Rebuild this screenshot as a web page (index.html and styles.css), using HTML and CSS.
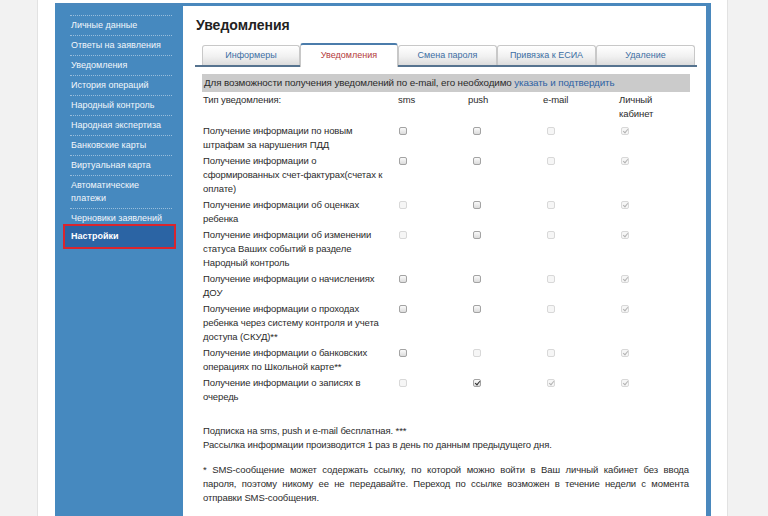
FILE: index.html
```html
<!DOCTYPE html>
<html lang="ru">
<head>
<meta charset="utf-8">
<title>Уведомления</title>
<link rel="stylesheet" href="styles.css">
</head>
<body>
<div class="page">
  <div class="frame">
    <nav class="sidebar">
      <ul class="menu">
        <li>Личные данные</li>
        <li>Ответы на заявления</li>
        <li>Уведомления</li>
        <li>История операций</li>
        <li>Народный контроль</li>
        <li>Народная экспертиза</li>
        <li>Банковские карты</li>
        <li>Виртуальная карта</li>
        <li>Автоматические<br>платежи</li>
        <li>Черновики заявлений</li>
      </ul>
      <div class="menu-active">Настройки</div>
    </nav>
    <main class="main">
      <h1 class="title">Уведомления</h1>
      <div class="tabs">
        <div class="tab w98">Информеры</div>
        <div class="tab active w98">Уведомления</div>
        <div class="tab w99">Смена пароля</div>
        <div class="tab w99">Привязка к ЕСИА</div>
        <div class="tab w99">Удаление</div>
      </div>
      <div class="notice">Для возможности получения уведомлений по e-mail, его необходимо <a class="link" href="#">указать и подтвердить</a></div>
      <table class="grid">
        <colgroup>
          <col class="c-text"><col class="c-opt"><col class="c-opt"><col class="c-opt"><col class="c-last">
        </colgroup>
        <tr class="head">
          <td>Тип уведомления:</td>
          <td>sms</td>
          <td class="h-push">push</td>
          <td class="h-mail">e-mail</td>
          <td class="h-lk">Личный<br>кабинет</td>
        </tr>
        <tr>
          <td>Получение информации по новым<br>штрафам за нарушения ПДД</td>
          <td><span class="cb"></span></td>
          <td><span class="cb"></span></td>
          <td><span class="cb dis"></span></td>
          <td><span class="cb dis on"></span></td>
        </tr>
        <tr>
          <td>Получение информации о<br>сформированных счет-фактурах(счетах к<br>оплате)</td>
          <td><span class="cb"></span></td>
          <td><span class="cb"></span></td>
          <td><span class="cb dis"></span></td>
          <td><span class="cb dis on"></span></td>
        </tr>
        <tr>
          <td>Получение информации об оценках<br>ребенка</td>
          <td><span class="cb dis"></span></td>
          <td><span class="cb"></span></td>
          <td><span class="cb dis"></span></td>
          <td><span class="cb dis on"></span></td>
        </tr>
        <tr>
          <td>Получение информации об изменении<br>статуса Ваших событий в разделе<br>Народный контроль</td>
          <td><span class="cb dis"></span></td>
          <td><span class="cb"></span></td>
          <td><span class="cb dis"></span></td>
          <td><span class="cb dis on"></span></td>
        </tr>
        <tr>
          <td>Получение информации о начислениях<br>ДОУ</td>
          <td><span class="cb"></span></td>
          <td><span class="cb"></span></td>
          <td><span class="cb dis"></span></td>
          <td><span class="cb dis on"></span></td>
        </tr>
        <tr>
          <td>Получение информации о проходах<br>ребенка через систему контроля и учета<br>доступа (СКУД)**</td>
          <td><span class="cb"></span></td>
          <td><span class="cb"></span></td>
          <td><span class="cb dis"></span></td>
          <td><span class="cb dis on"></span></td>
        </tr>
        <tr>
          <td>Получение информации о банковских<br>операциях по Школьной карте**</td>
          <td><span class="cb"></span></td>
          <td><span class="cb dis"></span></td>
          <td><span class="cb dis"></span></td>
          <td><span class="cb dis on"></span></td>
        </tr>
        <tr>
          <td>Получение информации о записях в<br>очередь</td>
          <td><span class="cb dis"></span></td>
          <td><span class="cb on"></span></td>
          <td><span class="cb dis on"></span></td>
          <td><span class="cb dis on"></span></td>
        </tr>
      </table>
      <div class="notes">
        <p class="note">Подписка на sms, push и e-mail бесплатная. ***<br>Рассылка информации производится 1 раз в день по данным предыдущего дня.</p>
        <p class="note">
          <span class="jline">* SMS-сообщение может содержать ссылку, по которой можно войти в Ваш личный кабинет без ввода</span>
          <span class="jline">пароля, поэтому никому ее не передавайте. Переход по ссылке возможен в течение недели с момента</span>
          <span class="lline">отправки SMS-сообщения.</span>
        </p>
      </div>
    </main>
  </div>
</div>
</body>
</html>
```

FILE: styles.css
```css
html, body {
  margin: 0;
  padding: 0;
}
body {
  background: #f2f2f2;
  font-family: "Liberation Sans", Arial, sans-serif;
  color: #2b2b2b;
  overflow: hidden;
}
.page {
  box-sizing: border-box;
  width: 691px;
  height: 516px;
  margin-left: 37px;
  padding: 3px 16px 0 17px;
  background: #fff;
  border-left: 1px solid #e2e2e2;
  border-right: 1px solid #e2e2e2;
  overflow: hidden;
}
.frame {
  display: flex;
  height: 520px;
  border-top: 3px solid #4a88bd;
  border-right: 5px solid #4a88bd;
}
.sidebar {
  width: 128px;
  flex: none;
  background: #4689bf;
  padding-top: 9px;
}
.menu {
  list-style: none;
  margin: 0 11px 0 15px;
  padding: 0;
  border-top: 1px dotted rgba(255, 255, 255, 0.45);
}
.menu li {
  padding: 3px 0 3px 1px;
  font-size: 9px;
  line-height: 13px;
  color: #f3f7fb;
  border-bottom: 1px dotted rgba(255, 255, 255, 0.45);
  white-space: nowrap;
}
.menu-active {
  margin: -5px 7px 0 8px;
  height: 25px;
  box-sizing: border-box;
  border: 2px solid #d9252e;
  background: #2b64a4;
  padding-left: 6px;
  font-size: 9px;
  line-height: 21px;
  font-weight: bold;
  color: #fff;
}
.main {
  flex: 1;
  padding-left: 12px;
  min-width: 0;
}
.title {
  margin: 10px 0 0 1px;
  font-size: 14px;
  line-height: 18px;
  font-weight: bold;
  color: #222;
}
.tabs {
  display: flex;
  align-items: flex-end;
  height: 22px;
  margin: 9px 9px 0 0;
  padding-left: 7px;
  border-bottom: 2px solid #56738f;
}
.tab {
  box-sizing: border-box;
  height: 20px;
  border: 1px solid #c8c8c8;
  border-bottom: none;
  border-radius: 3px 3px 0 0;
  background: linear-gradient(#ffffff, #f1f1f1 55%, #dcdcdc);
  font-size: 9px;
  line-height: 19px;
  text-align: center;
  color: #3d6ea3;
}
.w98 { width: 98px; }
.w99 { width: 99px; }
.tab.active {
  height: 24px;
  margin-bottom: -2px;
  border-top: 2px solid #4b7cab;
  background: #fff;
  line-height: 21px;
  color: #b33a3a;
}
.notice {
  margin: 7px 16px 0 7px;
  height: 18px;
  padding-left: 2px;
  background: #cbcbcb;
  font-size: 9.8px;
  letter-spacing: -0.1px;
  line-height: 18px;
  color: #2a2a2a;
  white-space: nowrap;
}
.link {
  color: #2d62a3;
  text-decoration: none;
}
.grid {
  margin-left: 7px;
  width: 487px;
  border-collapse: collapse;
  table-layout: fixed;
  font-size: 9.5px;
  letter-spacing: -0.1px;
  line-height: 14px;
  color: #2b2b2b;
}
.c-text { width: 195px; }
.c-opt { width: 74px; }
.c-last { width: 70px; }
.grid td {
  padding: 1px 0 1px 1px;
  vertical-align: top;
  white-space: nowrap;
}
.grid tr.head td {
  padding: 1px 0 2px 1px;
}
.grid tr.head td.h-push { text-indent: -4px; }
.grid tr.head td.h-mail { text-indent: -3px; }
.grid tr.head td.h-lk { padding-left: 0; }
.cb {
  display: block;
  position: relative;
  box-sizing: border-box;
  width: 8px;
  height: 8px;
  margin: 3px 0 0 1px;
  border: 1px solid #a3a3a3;
  border-radius: 2px;
  background: linear-gradient(#fafafa, #dcdcdc);
}
.cb.dis {
  border-color: #d8d8d8;
  background: #f6f6f6;
}
.cb.on::after {
  content: "";
  position: absolute;
  left: 2px;
  top: 0;
  width: 2px;
  height: 4px;
  border: solid #2e2e2e;
  border-width: 0 1.5px 1.5px 0;
  transform: rotate(40deg);
}
.cb.dis.on::after {
  border-color: #b3b3b3;
}
.notes {
  margin: 19px 17px 0 7px;
  font-size: 9.5px;
  letter-spacing: -0.1px;
  line-height: 14px;
  color: #2b2b2b;
}
.note {
  margin: 0 0 11px 0;
  padding-left: 1px;
}
.jline {
  display: block;
  text-align: justify;
  text-align-last: justify;
}
.lline {
  display: block;
}
```
